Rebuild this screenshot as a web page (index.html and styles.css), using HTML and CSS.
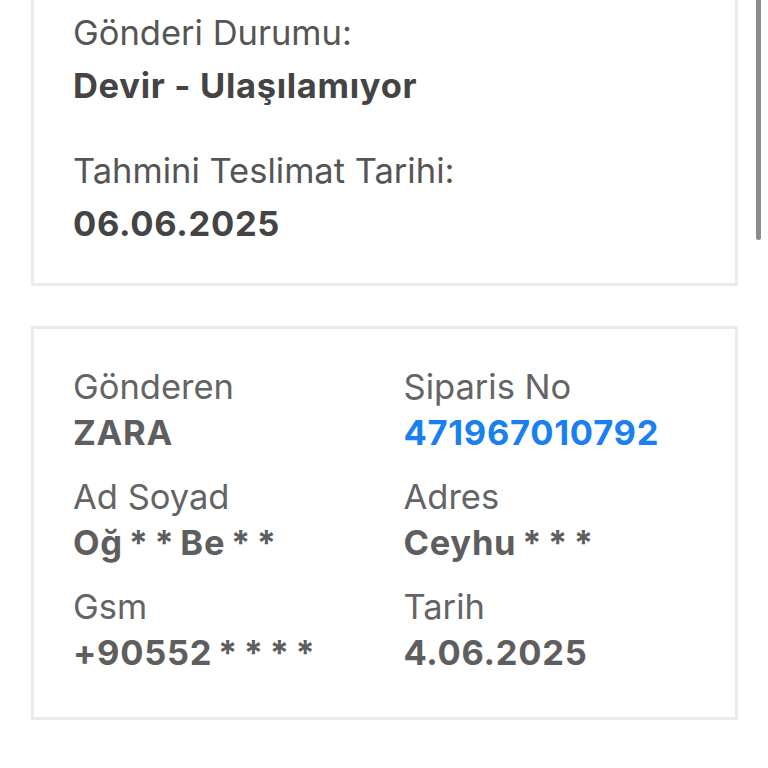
FILE: index.html
```html
<!DOCTYPE html>
<html lang="tr">
<head>
    <meta charset="UTF-8">
    <meta name="viewport" content="width=device-width, initial-scale=1.0">
    <title>Gönderi Takip</title>
    <link rel="stylesheet" href="styles.css">
</head>
<body>

<div class="container">
    <div class="card status-card">
        <div class="label">Gönderi Durumu:</div>
        <div class="value">Devir - Ulaşılamıyor</div>

        <div class="label spaced">Tahmini Teslimat Tarihi:</div>
        <div class="value">06.06.2025</div>
    </div>

    <div class="card info-card">
        <div class="info-grid">
            <div class="item">
                <div class="label">Gönderen</div>
                <div class="value">ZARA</div>
            </div>
            <div class="item">
                <div class="label">Siparis No</div>
                <div class="value link">471967010792</div>
            </div>
            <div class="item">
                <div class="label">Ad Soyad</div>
                <div class="value">Oğ * * Be * *</div>
            </div>
            <div class="item">
                <div class="label">Adres</div>
                <div class="value">Ceyhu * * *</div>
            </div>
            <div class="item">
                <div class="label">Gsm</div>
                <div class="value">+90552 * * * *</div>
            </div>
            <div class="item">
                <div class="label">Tarih</div>
                <div class="value">4.06.2025</div>
            </div>
        </div>
    </div>
</div>

<div class="scrollbar"></div>

</body>
</html>
```

FILE: styles.css
```css
body {
    font-family: Inter, "Liberation Sans", Arial, sans-serif;
    margin: 0;
    padding: 0;
    background-color: #ffffff;
    overflow: hidden;
}

.container {
    padding: 0 30px 0 31px;
}

.card {
    border: 3px solid #ebebeb;
    background: #ffffff;
    padding: 38px 40px 39px 39px;
}

.label {
    font-size: 34.5px;
    line-height: 40px;
}

.value {
    font-size: 34.5px;
    line-height: 40px;
    font-weight: bold;
    letter-spacing: 0.7px;
}

.status-card {
    margin-top: -28px;
}

.status-card .label {
    color: #555555;
}

.status-card .value {
    color: #444444;
    margin-top: 13px;
}

.status-card .spaced {
    margin-top: 45px;
}

.info-card {
    margin-top: 40px;
    padding-bottom: 44px;
}

.info-grid {
    display: grid;
    grid-template-columns: 1fr 1fr;
    column-gap: 39px;
    row-gap: 24px;
}

.info-card .label {
    color: #646464;
}

.info-card .value {
    color: #5e5e5e;
    margin-top: 6px;
    word-spacing: -3px;
}

.info-card .link {
    color: #1a7ff0;
}

.scrollbar {
    position: fixed;
    top: -10px;
    right: 7px;
    width: 5px;
    height: 250px;
    border-radius: 3px;
    background: #8a8a8a;
}
```
